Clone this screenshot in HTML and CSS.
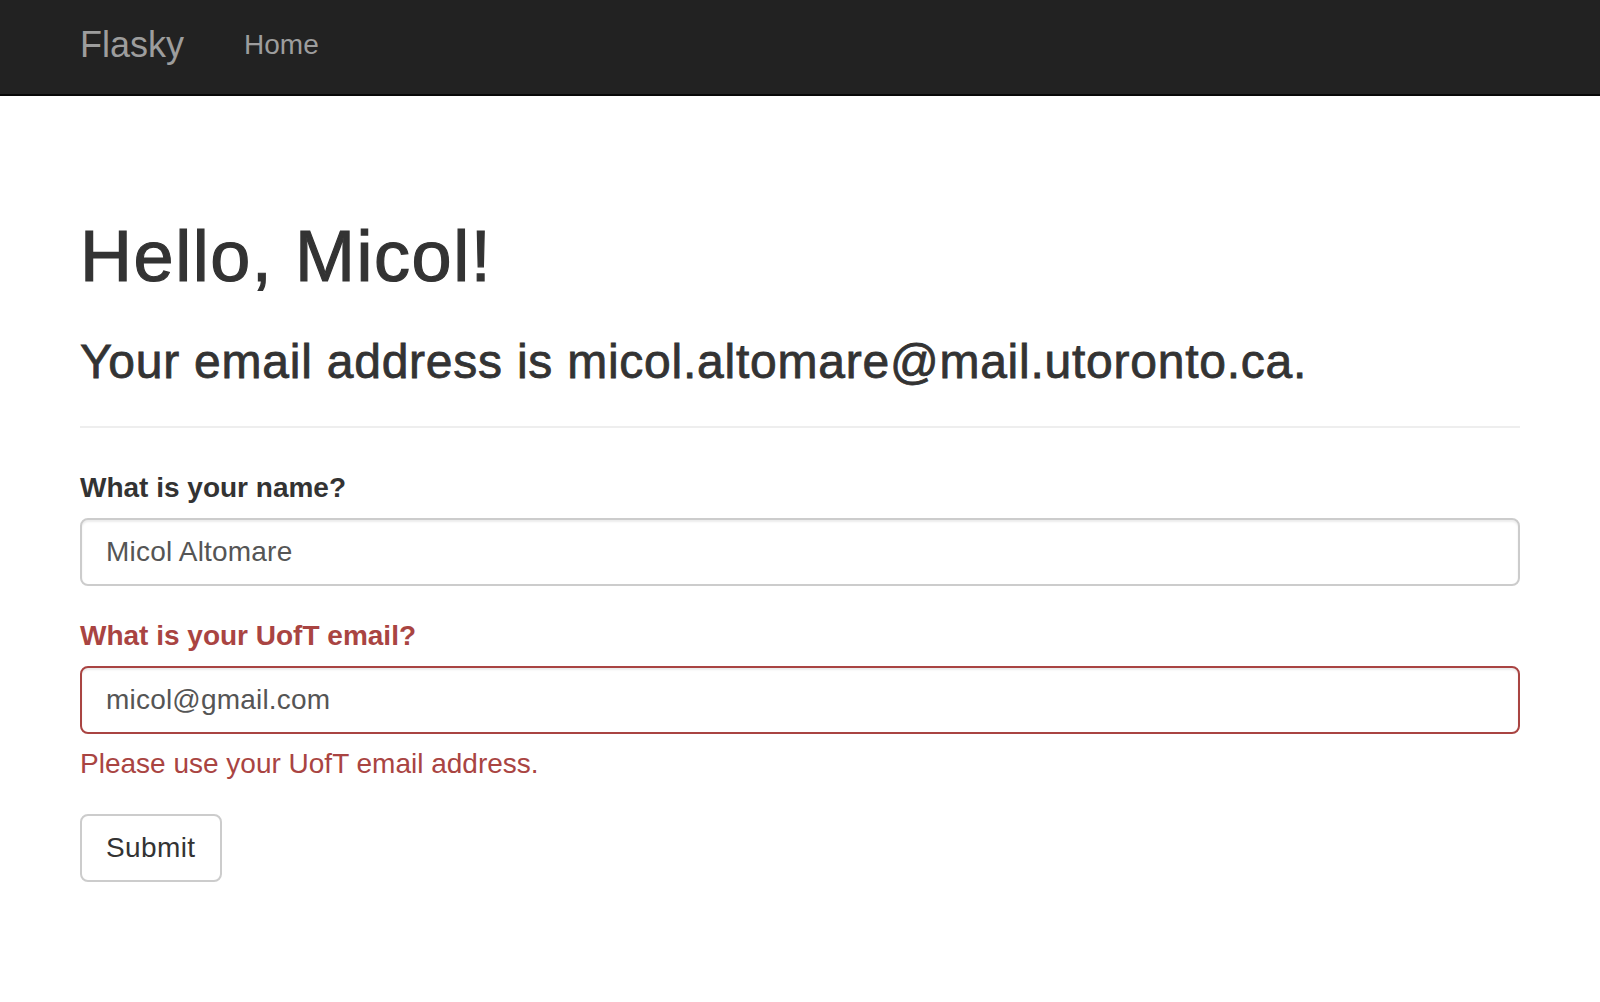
FILE: index.html
```html
<!DOCTYPE html>
<html lang="en">
<head>
<meta charset="utf-8">
<title>Flasky</title>
<link rel="stylesheet" href="styles.css">
</head>
<body>
<nav class="navbar">
  <div class="container navbar-inner">
    <a class="brand" href="#">Flasky</a>
    <ul class="nav">
      <li><a href="#">Home</a></li>
    </ul>
  </div>
</nav>
<div class="container">
  <div class="page-header">
    <h1>Hello, Micol!</h1>
    <h3>Your email address is micol.altomare@mail.utoronto.ca.</h3>
  </div>
  <form class="form">
    <div class="form-group">
      <label class="control-label" for="name">What is your name?</label>
      <input class="form-control" id="name" type="text" value="Micol Altomare">
    </div>
    <div class="form-group has-error">
      <label class="control-label" for="email">What is your UofT email?</label>
      <input class="form-control" id="email" type="text" value="micol@gmail.com">
      <p class="help-block">Please use your UofT email address.</p>
    </div>
    <button class="btn" type="button">Submit</button>
  </form>
</div>
</body>
</html>
```

FILE: styles.css
```css
* { box-sizing: border-box; }

html, body {
  margin: 0;
  padding: 0;
  background: #fff;
}

body {
  font-family: "Liberation Sans", Arial, Helvetica, sans-serif;
  font-size: 28px;
  line-height: 40px;
  color: #333;
}

.container {
  width: 1440px;
  margin: 0 auto;
}

.navbar {
  background: #222;
  border-bottom: 2px solid #080808;
  height: 96px;
}

.navbar-inner {
  display: flex;
  align-items: flex-start;
}

.brand {
  display: block;
  padding: 25px 30px 29px 0;
  font-size: 36px;
  line-height: 40px;
  color: #9d9d9d;
  text-decoration: none;
}

.nav {
  display: flex;
  list-style: none;
  margin: 0;
  padding: 0;
}

.nav a {
  display: block;
  padding: 25px 30px 29px;
  font-size: 28px;
  line-height: 40px;
  color: #9d9d9d;
  text-decoration: none;
}

.page-header {
  margin: 121px 0 40px;
  padding-bottom: 18px;
  border-bottom: 2px solid #eee;
}

.page-header h1 {
  margin: 0 0 40px;
  font-size: 72px;
  line-height: 79.2px;
  font-weight: 400;
  letter-spacing: 1.55px;
  color: #333;
  -webkit-text-stroke: 1.2px #333;
}

.page-header h3 {
  margin: 0 0 19px;
  font-size: 48px;
  line-height: 52.8px;
  font-weight: 400;
  letter-spacing: 0.76px;
  color: #333;
  -webkit-text-stroke: 0.8px #333;
}

.form {
  margin: 0;
}

.form-group {
  margin-bottom: 30px;
}

.control-label {
  display: inline-block;
  margin-bottom: 10px;
  font-weight: 700;
}

.form-control {
  display: block;
  width: 100%;
  height: 68px;
  padding: 12px 24px;
  font-family: inherit;
  font-size: 28px;
  line-height: 40px;
  letter-spacing: 0.2px;
  color: #555;
  background: #fff;
  border: 2px solid #ccc;
  border-radius: 8px;
  box-shadow: inset 0 2px 2px rgba(0, 0, 0, 0.075);
  outline: none;
}

.has-error .control-label,
.has-error .help-block {
  color: #a94442;
}

.has-error .form-control {
  border-color: #a94442;
}

.help-block {
  display: block;
  margin: 10px 0 20px;
}

.btn {
  display: inline-block;
  padding: 12px 24px;
  font-family: inherit;
  font-size: 28px;
  line-height: 40px;
  letter-spacing: 0.4px;
  color: #333;
  background: #fff;
  border: 2px solid #ccc;
  border-radius: 8px;
  cursor: pointer;
}
```
